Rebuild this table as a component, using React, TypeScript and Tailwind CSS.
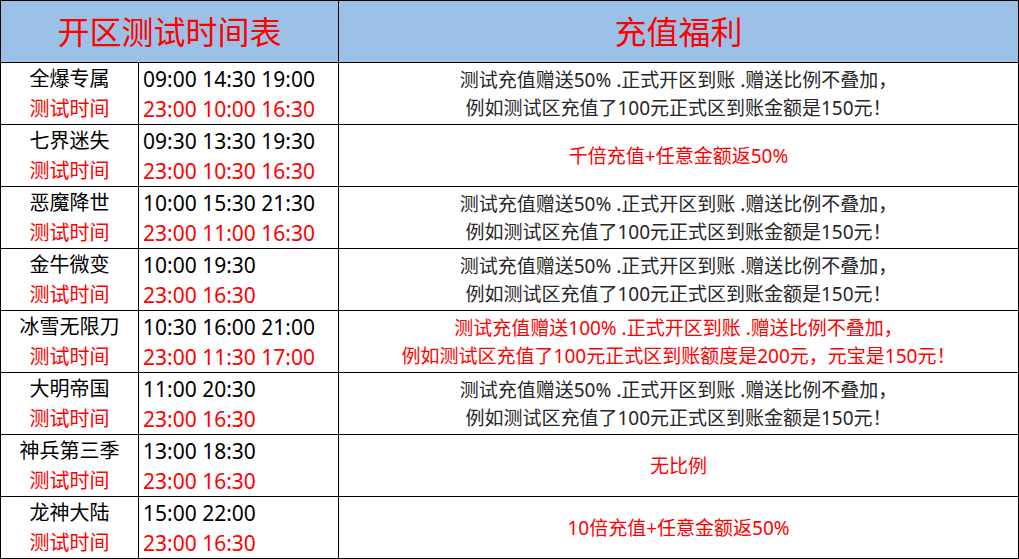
const rows: { name: string; open: string; test: string; lines: string[]; red?: boolean }[] = [
  {
    name: "全爆专属",
    open: "09:00 14:30 19:00",
    test: "23:00 10:00 16:30",
    lines: ["测试充值赠送50% .正式开区到账 .赠送比例不叠加，", "例如测试区充值了100元正式区到账金额是150元！"],
  },
  {
    name: "七界迷失",
    open: "09:30 13:30 19:30",
    test: "23:00 10:30 16:30",
    lines: ["千倍充值+任意金额返50%"],
    red: true,
  },
  {
    name: "恶魔降世",
    open: "10:00 15:30 21:30",
    test: "23:00 11:00 16:30",
    lines: ["测试充值赠送50% .正式开区到账 .赠送比例不叠加，", "例如测试区充值了100元正式区到账金额是150元！"],
  },
  {
    name: "金牛微变",
    open: "10:00 19:30",
    test: "23:00 16:30",
    lines: ["测试充值赠送50% .正式开区到账 .赠送比例不叠加，", "例如测试区充值了100元正式区到账金额是150元！"],
  },
  {
    name: "冰雪无限刀",
    open: "10:30 16:00 21:00",
    test: "23:00 11:30 17:00",
    lines: ["测试充值赠送100% .正式开区到账 .赠送比例不叠加，", "例如测试区充值了100元正式区到账额度是200元，元宝是150元！"],
    red: true,
  },
  {
    name: "大明帝国",
    open: "11:00 20:30",
    test: "23:00 16:30",
    lines: ["测试充值赠送50% .正式开区到账 .赠送比例不叠加，", "例如测试区充值了100元正式区到账金额是150元！"],
  },
  {
    name: "神兵第三季",
    open: "13:00 18:30",
    test: "23:00 16:30",
    lines: ["无比例"],
    red: true,
  },
  {
    name: "龙神大陆",
    open: "15:00 22:00",
    test: "23:00 16:30",
    lines: ["10倍充值+任意金额返50%"],
    red: true,
  },
]

export default function App() {
  return (
    <div
      className="grid w-[1019px] h-[559px] grid-cols-[137px_199px_679px] grid-rows-[repeat(9,61px)] gap-px bg-black p-px"
      style={{ fontFamily: '"Noto Sans", "Noto Sans CJK SC", sans-serif' }}
    >
      <div className="col-span-2 flex items-center justify-center bg-[#9bc2e6] text-[32px] text-[#ff0000]">
        开区测试时间表
      </div>
      <div className="flex items-center justify-center bg-[#9bc2e6] text-[32px] text-[#ff0000]">
        充值福利
      </div>

      {rows.map((row) => (
        <>
          <div key={row.name + "-n"} className="flex flex-col justify-center bg-white text-center text-[20px]">
            <div className="leading-[30px] text-black">{row.name}</div>
            <div className="leading-[30px] text-[#ff0000]">测试时间</div>
          </div>
          <div key={row.name + "-t"} className="flex flex-col justify-center bg-white pl-[4px] text-[21px]">
            <div className="leading-[30px] text-black">{row.open}</div>
            <div className="leading-[30px] text-[#ff0000]">{row.test}</div>
          </div>
          <div
            key={row.name + "-b"}
            className={
              "flex flex-col items-center justify-center bg-white text-[19px] " +
              (row.red ? "text-[#ff0000]" : "text-[#262626]")
            }
          >
            {row.lines.map((line) => (
              <div key={line} className="leading-[28px]">
                {line}
              </div>
            ))}
          </div>
        </>
      ))}
    </div>
  )
}
